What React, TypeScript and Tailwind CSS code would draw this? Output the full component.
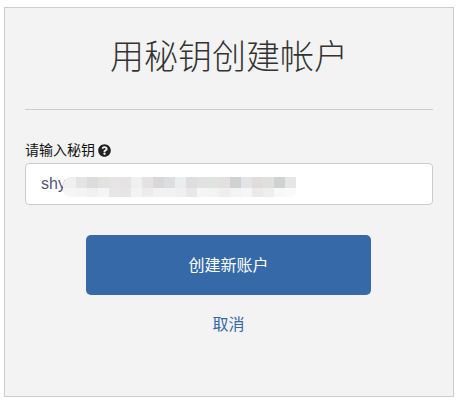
import { FaQuestionCircle } from 'react-icons/fa'

const topRow = ['#f0f0f0', '#e4e4e4', '#dcdcdc', '#e2e2e0', '#e6e4e4', '#e4e4e4', '#f0f0f0', '#e4e2e2', '#d8d8d8', '#dcdee0', '#ebeeee', '#dedede', '#e2e2e2', '#e0e4e0', '#e4e0e0', '#d0d2d2', '#e2e4e8', '#e0dcdc', '#e0e0e0', '#d0d2d2', '#e6e6e6']
const bottomRow = ['#f6f6f6', '#f4f4f2', '#f0f1f4', '#f5f5f5', '#e8e6e6', '#e6e6e6', '#f2f4f4', '#ececec', '#f2f2f2', '#f2f2f2', '#f0f0f0', '#e8e8e8', '#f5f5f5', '#f3f3f3', '#eeeeee', '#f3f3f3', '#f6f6f6', '#eaeaea', '#eeeeee', '#f8f8f8', '#fafafa']

export default function App() {
  return (
    <div className="h-[400px] w-[457px] overflow-hidden bg-white pt-[7px] pl-1 font-['Liberation_Sans','Noto_Sans_CJK_SC',sans-serif]">
      <div className="h-[390px] w-[450px] border border-[#cccccc] bg-[#f3f3f3] px-5">
        <h1 className="mt-[26px] text-center text-[34px] leading-[46px] font-light text-[#333333]">用秘钥创建帐户</h1>
        <hr className="mt-[29px] border-[#cccccc]" />
        <label className="mt-[31px] flex h-[18px] items-center gap-[3px] text-sm text-[#111111]">
          请输入秘钥
          <FaQuestionCircle className="h-[13px] w-[13px] text-[#222222]" />
        </label>
        <div className="mt-[4px] flex h-[42px] items-center rounded border border-[#cccccc] bg-white pl-[15px]">
          <span className="text-base text-[#555577]">shy</span>
          <div className="-ml-[3px] mt-[6px] w-[233px] overflow-hidden rounded-l-[8px] rounded-br-[6px]">
            <div className="flex h-[11px]">
              {topRow.map((color, i) => <div key={i} className={i === 0 ? 'h-full w-[13px]' : 'h-full w-[11px]'} style={{ backgroundColor: color }} />)}
            </div>
            <div className="flex h-[9px]">
              {bottomRow.map((color, i) => <div key={i} className={i === 0 ? 'h-full w-[13px]' : 'h-full w-[11px]'} style={{ backgroundColor: color }} />)}
            </div>
          </div>
        </div>
        <button className="mt-[30px] ml-[61px] block h-[60px] w-[285px] rounded-[5px] bg-[#3569a8] pt-[1px] text-base text-white">创建新账户</button>
        <a className="mt-[20px] ml-[61px] block w-[285px] text-center text-base leading-5 text-[#3569a8]">取消</a>
      </div>
    </div>
  )
}
